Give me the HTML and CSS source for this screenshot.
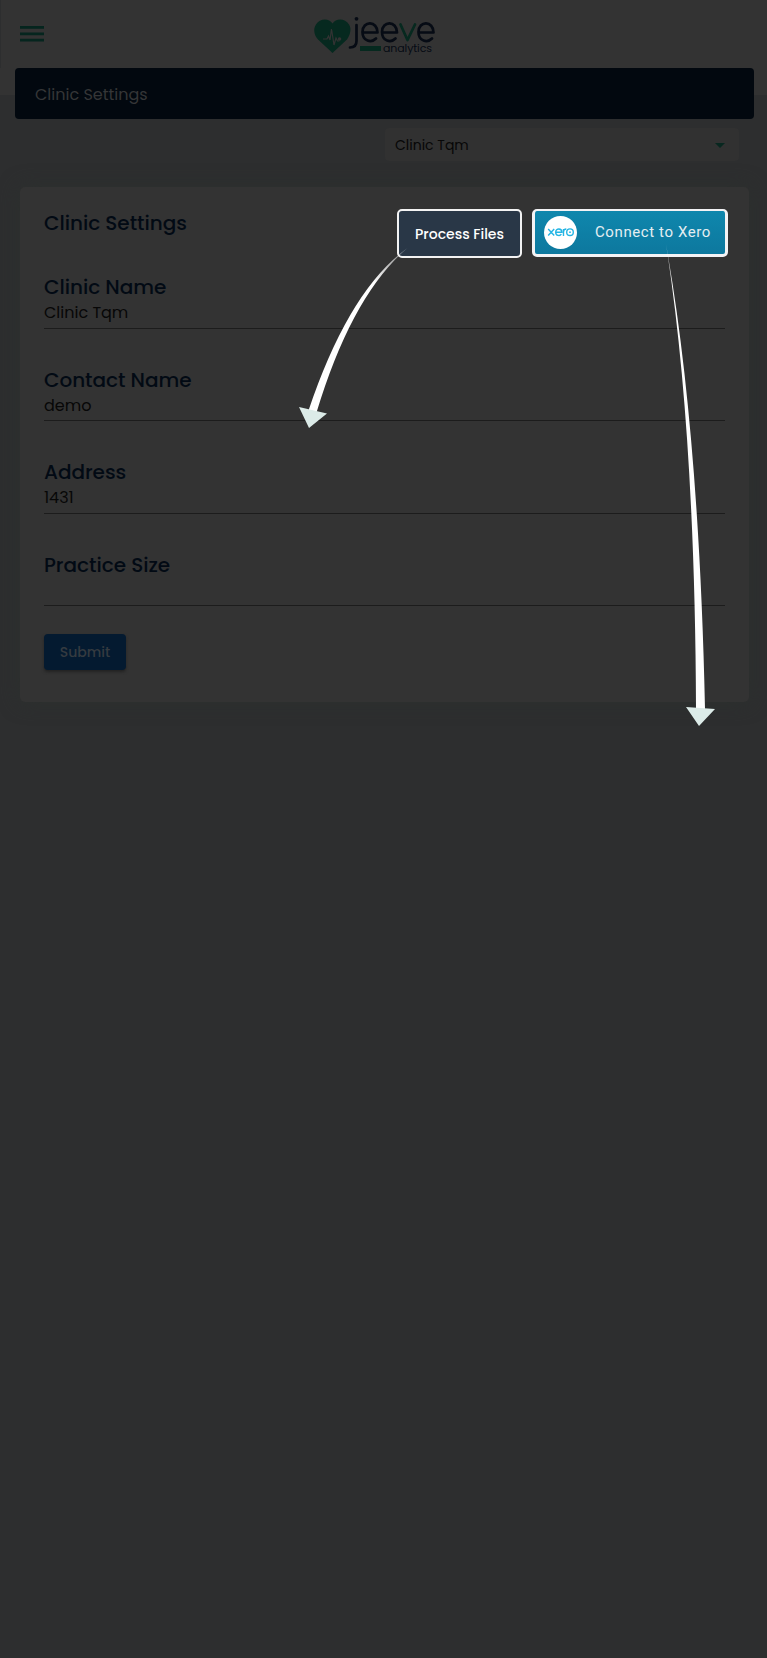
FILE: index.html
```html
<!DOCTYPE html>
<html lang="en">
<head>
<meta charset="utf-8">
<title>Clinic Settings</title>
<link rel="stylesheet" href="styles.css">
</head>
<body>
<header class="topbar">
  <svg class="menu" viewBox="0 0 24 16"><path d="M0 1.4h24M0 7.8h24M0 14.2h24"/></svg>
  <svg class="logo" width="124" height="44" viewBox="312 12 124 44">
    <path class="heart" d="M332.500 53L318 39.500C314 35 313 29 316 24.500C320 18 329 18 332.500 23.500C336 18 345 18 349 24.500C352 29 350 35 347 39.500Z"/>
    <path class="pulse" d="M323 39h4l1.500-3 1.500 4 1.500-11 2.500 16 2-7 1.500 3h2"/><circle class="pulse-dot" cx="339.500" cy="39" r="1.800"/>
    <g class="letters">
      <path d="M356.500 25V41Q356.500 47.500 350 47.500"/>
      <path d="M363 32.500H377.500C377.500 20.500 362.500 20.500 362.500 32C362.500 41.500 371.500 43 376 38.500"/>
      <path d="M382.500 32.500H397C397 20.500 382 20.500 382 32C382 41.500 391 43 395.500 38.500"/>
      <path d="M419 32.500H433.500C433.500 20.500 418.500 20.500 418.500 32C418.500 41.500 427.500 43 432 38.500"/>
      <path class="vee" d="M400.500 24.500L407.500 40L415 24.500"/>
    </g>
    <circle class="dot" cx="356.500" cy="18.800" r="1.900"/>
    <path class="underline" d="M360 46h21v5h-21z"/>
    <text class="tagline" x="383" y="51.500" textLength="49">analytics</text>
  </svg>
</header>
<main>
  <h1 class="title"><span>Clinic Settings</span></h1>
  <div class="picker"><span>Clinic Tqm</span><i class="caret"></i></div>
  <section class="card">
    <div class="card-head">
      <h2 class="label">Clinic Settings</h2>
      <div class="actions">
        <button class="process"><span>Process Files</span></button>
        <button class="xero">
          <svg class="xero-logo" viewBox="0 0 33 33"><circle cx="16.500" cy="16.500" r="16.500" fill="#fff"/><g fill="none" stroke="#25b5e4" stroke-width="1.400"><path d="M4.200 13l6 6.500M10.200 13l-6 6.500M11.700 16.200h6.200c0-4.300-6.200-4.300-6.200 0c0 3.700 4.300 4.200 5.600 2M19.500 20v-7M19.500 16q0-3 2.800-3"/><circle cx="26" cy="16.200" r="3.300"/></g><circle cx="26" cy="16.200" r=".9" fill="#25b5e4"/></svg>
          <span class="xero-text">Connect to Xero</span>
        </button>
      </div>
    </div>
    <div class="field"><h3 class="label">Clinic Name</h3><p class="value">Clinic Tqm</p></div>
    <div class="field low"><h3 class="label">Contact Name</h3><p class="value">demo</p></div>
    <div class="field"><h3 class="label">Address</h3><p class="value">1431</p></div>
    <div class="field low"><h3 class="label">Practice Size</h3><p class="value"></p></div>
    <button class="submit">Submit</button>
  </section>
</main>
<svg class="arrows" width="767" height="1658" viewBox="0 0 767 1658">
  <defs>
    <linearGradient id="fadeA" gradientUnits="userSpaceOnUse" x1="407" y1="248" x2="375" y2="284"><stop stop-color="#fff" stop-opacity=".35"/><stop offset="1" stop-color="#fff"/></linearGradient>
    <linearGradient id="fadeB" gradientUnits="userSpaceOnUse" x1="667" y1="246" x2="673" y2="285"><stop stop-color="#fff" stop-opacity=".5"/><stop offset="1" stop-color="#fff"/></linearGradient>
  </defs>
  <path fill="url(#fadeA)" d="M407.500 248Q349 290 308.500 410.500L316.500 412.500Q352 295 407.500 248Z"/>
  <path fill="url(#fadeB)" d="M666 244Q695 430 696 709H705Q699 430 666 244Z"/>
  <path fill="#dcebe8" d="M299 407L327 413.500L309 428ZM686 707L715 709L699 726Z"/>
</svg>
</body>
</html>
```

FILE: styles.css
```css
* { box-sizing: border-box; }
body {
  margin: 0; height: 1658px; position: relative; overflow: hidden;
  background: linear-gradient(#333 95px, #2d2e2f 95px);
  font-family: Poppins, Inter, sans-serif; color: #070707;
}
h1, h2, h3, p { margin: 0; font-weight: 400; }
button { border: 0; padding: 0; font-family: inherit; }
.topbar { height: 68px; display: flex; align-items: flex-start; border-left: 1px solid #2d2e2f; }
.menu { width: 24px; height: 16px; margin: 25.500px 0 0 18.500px; fill: none; stroke: #05251e; stroke-width: 2.700; }
.logo { margin: 12px 0 0 268.500px; }
.heart { fill: #06291f; }
.pulse { fill: none; stroke: #333; stroke-width: 1.200; }
.pulse-dot { fill: #333; }
.letters { fill: none; stroke: #060b14; stroke-width: 2.700; stroke-linecap: round; stroke-linejoin: round; }
.letters .vee { stroke: #06291f; }
.dot { fill: #060b14; }
.underline { fill: #06291f; }
.tagline { fill: #060b14; font: 11px Poppins, Inter, sans-serif; }
main { display: flex; flex-direction: column; }
.title {
  height: 51px; margin: 0 13px 0 15px; padding: 1px 20px 0; border-radius: 4px;
  display: flex; align-items: center; background: #02080f; color: #353637;
  font-size: 16px;
}
.picker {
  height: 33px; width: 354px; margin: 9px 28px 0 auto; padding: 1px 14px 0 10px;
  border-radius: 4px; background: #313131; display: flex; align-items: center; justify-content: space-between;
  font-size: 14px;
}
.caret { border: 5px solid transparent; border-top-color: #07271f; border-bottom: 0; }
.card {
  height: 515px; margin: 26px 18px 0 20px; padding: 22px 21px 0 24px; border-radius: 5px;
  background: #333; box-shadow: 0 0 20px #2c302e;
}
.card-head { display: flex; justify-content: space-between; height: 60px; }
.label { font-size: 20px; font-weight: 500; line-height: 28px; color: #020a14; white-space: nowrap; letter-spacing: -0.030px; }
.actions { display: flex; gap: 10px; }
.process {
  width: 125px; height: 49px; border: 2px solid #f3f3f3; border-radius: 5px; background: #293747;
  color: #fff; font-size: 14px; font-weight: 500; padding-top: 2px;
}
.xero {
  width: 196px; height: 48px; border: 3px solid #f3f3f5; border-top-width: 2px; border-radius: 5px;
  background: linear-gradient(#0f87ad, #0d789e); display: flex; align-items: center; padding: 0 14px 0 9px;
  justify-content: space-between; color: #e4eef2; font: 15px Roboto, sans-serif; letter-spacing: 0.600px; white-space: nowrap;
}
.xero-text { padding-bottom: 2px; }
.xero-logo { width: 33px; height: 33px; }
.field { height: 92.300px; padding-top: 4px; }
.field .label { height: 28px; }
.value { height: 28px; font-size: 16px; line-height: 23px; border-bottom: 1px solid #1c1c1c; margin-right: 3px; }
.low { padding-top: 5px; }
.low .value { height: 27px; }
.submit {
  width: 82px; height: 36px; margin-top: -4px; border-radius: 4px; background: #041a30; color: #353b40;
  font-size: 14px; font-weight: 500; box-shadow: 0 2px 3px #222; display: block;
}
.arrows { position: absolute; left: 0; top: 0; }
```
